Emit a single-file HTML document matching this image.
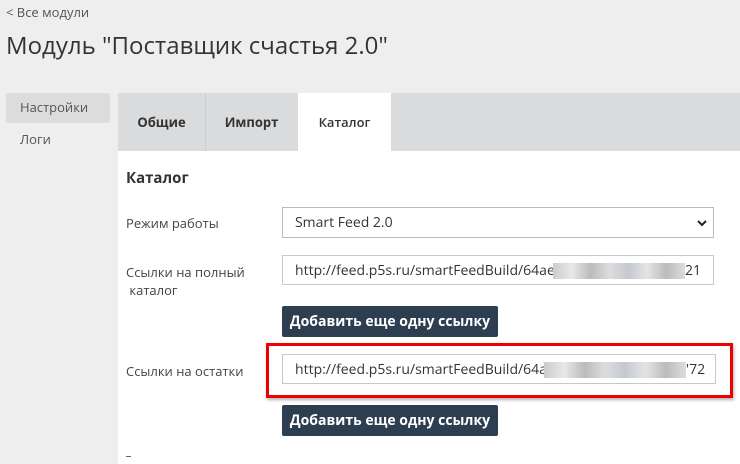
<!DOCTYPE html>
<html><head><meta charset="utf-8"><style>
body{margin:0;width:740px;height:464px;background:#eeeeee;font-family:"Open Sans","Liberation Sans",sans-serif;color:#333;position:relative;overflow:hidden}
.a{position:absolute}
.back{left:6px;top:3px;font-size:13px;color:#555}
h1{position:absolute;left:6px;top:29px;margin:0;font-size:24px;font-weight:normal;color:#333}
.side1{left:6px;top:93px;width:104px;height:30px;background:#dcdcdc;border-radius:2px;font-size:13px;color:#555;line-height:28px;text-indent:14px}
.side2{left:20px;top:130px;font-size:13px;color:#555}
.tabs{left:118px;top:93px;width:622px;height:58px;background:#dadbdd}
.tab{position:absolute;top:0;height:58px;line-height:58px;font-size:13px;font-weight:bold;color:#333;text-align:center}
.content{left:118px;top:151px;width:622px;height:313px;background:#fff}
.lbl{font-size:13px;color:#444;left:126px}
.inp{left:282px;width:432px;height:30px;border:1px solid #c8c8c8;background:#fff;font-size:14px;line-height:30px;text-indent:12px;color:#333;box-sizing:border-box;overflow:hidden;white-space:nowrap}
.btn{left:282px;width:216px;height:31px;background:#2d3e50;color:#fff;font-size:14px;font-weight:bold;line-height:31px;text-align:center;border-radius:2px}
.blur{position:absolute;top:7px;height:16px;background:#e6e6e6 linear-gradient(90deg,#ccc,#e8e8e8,#bbb,#ddd,#c4c8d0,#e4e4e4,#bbb,#ddd)}
.tail{position:absolute;top:0;background:#fff;text-indent:0;padding-right:6px}
</style></head><body>
<div class="a back">&lt; Все модули</div>
<h1>Модуль "Поставщик счастья 2.0"</h1>
<div class="a side1">Настройки</div>
<div class="a side2">Логи</div>
<div class="a tabs">
 <div class="tab" style="left:0;width:87px;border-right:1px solid #ccc">Общие</div>
 <div class="tab" style="left:88px;width:91px">Импорт</div>
 <div class="tab" style="left:180px;width:93px;background:#fff;font-weight:600">Каталог</div>
</div>
<div class="a content"></div>
<div class="a" style="left:126px;top:168px;font-size:15px;font-weight:bold;color:#333">Каталог</div>
<div class="a lbl" style="top:214px">Режим работы</div>
<div class="a inp" style="top:207px;height:31px;border-color:#bbb">Smart Feed 2.0<svg style="position:absolute;right:6px;top:11px" width="10" height="8" viewBox="0 0 10 8"><path d="M1 2l4 4 4-4" stroke="#222" stroke-width="2" fill="none"/></svg></div>
<div class="a lbl" style="top:263px;line-height:18px">Ссылки на полный<br>&nbsp;каталог</div>
<div class="a inp" style="top:255px">http://feed.p5s.ru/smartFeedBuild/64ae000000000000000<span class="blur" style="left:270px;width:132px"></span><span class="tail" style="left:402px">21</span></div>
<div class="a btn" style="top:306px">Добавить еще одну ссылку</div>
<div class="a" style="left:266px;top:343px;width:461px;height:49px;border:3px solid #e00;box-shadow:1px 2px 3px rgba(0,0,0,.3)"></div>
<div class="a lbl" style="top:362px">Ссылки на остатки</div>
<div class="a inp" style="top:354px;width:434px">http://feed.p5s.ru/smartFeedBuild/64a0000000000000000<span class="blur" style="left:261px;width:142px"></span><span class="tail" style="left:403px">'72</span></div>
<div class="a btn" style="top:405px">Добавить еще одну ссылку</div>
<div class="a" style="left:126px;top:456px;width:5px;height:1px;background:#666"></div>
</body></html>
